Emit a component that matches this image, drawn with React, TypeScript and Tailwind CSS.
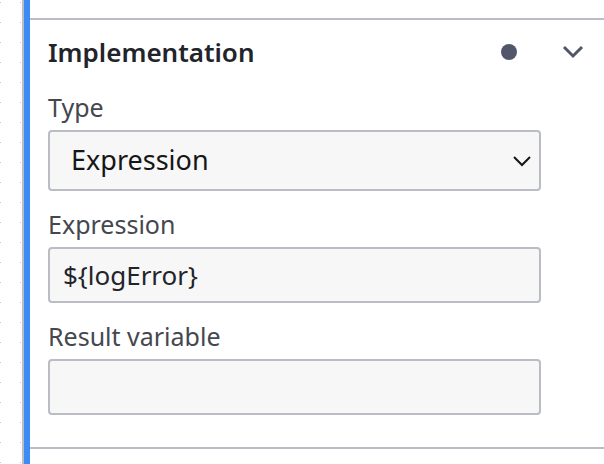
import React from "react";

function Dots() {
  return (
    <svg width="22" height="464" className="block">
      <defs>
        <pattern id="g" x="0" y="2" width="20" height="20" patternUnits="userSpaceOnUse">
          <rect x="0" y="0" width="1" height="1" fill="#c4c6cc" />
        </pattern>
      </defs>
      <rect x="0" y="0" width="22" height="464" fill="url(#g)" />
    </svg>
  );
}

function Field({ label, children }: { label: string; children: React.ReactNode }) {
  return (
    <div className="flex flex-col">
      <div className="text-[25px] leading-[38px] text-[#45474f] h-[38px]">{label}</div>
      <div className="mt-[4px]">{children}</div>
    </div>
  );
}

export default function App() {
  return (
    <div
      className="w-[604px] h-[464px] flex bg-white overflow-hidden"
      style={{ fontFamily: '"Noto Sans", "Open Sans", sans-serif' }}
    >
      <div className="w-[22px] shrink-0">
        <Dots />
      </div>
      <div className="w-[2px] shrink-0 bg-[#b9bcc6]" />
      <div className="w-[6px] shrink-0 bg-[#3d8cf6]" />
      <div className="flex-1 flex flex-col pt-[18px]">
        <div className="border-t-2 border-b-2 border-[#babdc6] h-[431px] flex flex-col">
          <div className="h-[68px] pb-[4px] flex items-center pl-[18px] pr-[20px]">
            <div className="text-[26px] font-semibold text-[#22242a] flex-1">Implementation</div>
            <div className="w-[16px] h-[16px] rounded-full bg-[#52566a] mr-[45px]" />
            <svg width="22" height="14" viewBox="0 0 22 14" className="block">
              <path d="M2 2 L11 11 L20 2" fill="none" stroke="#52566a" strokeWidth="3" />
            </svg>
          </div>
          <div className="pl-[18px] flex flex-col gap-[14px] w-[511px]">
            <Field label="Type">
              <div className="h-[61px] rounded-[4px] border-2 border-[#babdc6] bg-[#f7f7f8] flex items-center pl-[21px] pr-[8px]">
                <span className="text-[27px] text-[#161616] flex-1">Expression</span>
                <svg width="18" height="12" viewBox="0 0 18 12" className="block">
                  <path d="M1 2 L9 10 L17 2" fill="none" stroke="#161616" strokeWidth="2" />
                </svg>
              </div>
            </Field>
            <Field label="Expression">
              <div className="h-[56px] rounded-[4px] border-2 border-[#babdc6] bg-[#f7f7f8] flex items-center pl-[13px]">
                <span className="text-[26px] text-[#22242a]">{"${logError}"}</span>
              </div>
            </Field>
            <Field label="Result variable">
              <div className="h-[56px] rounded-[4px] border-2 border-[#babdc6] bg-[#f7f7f8]" />
            </Field>
          </div>
        </div>
      </div>
    </div>
  );
}
